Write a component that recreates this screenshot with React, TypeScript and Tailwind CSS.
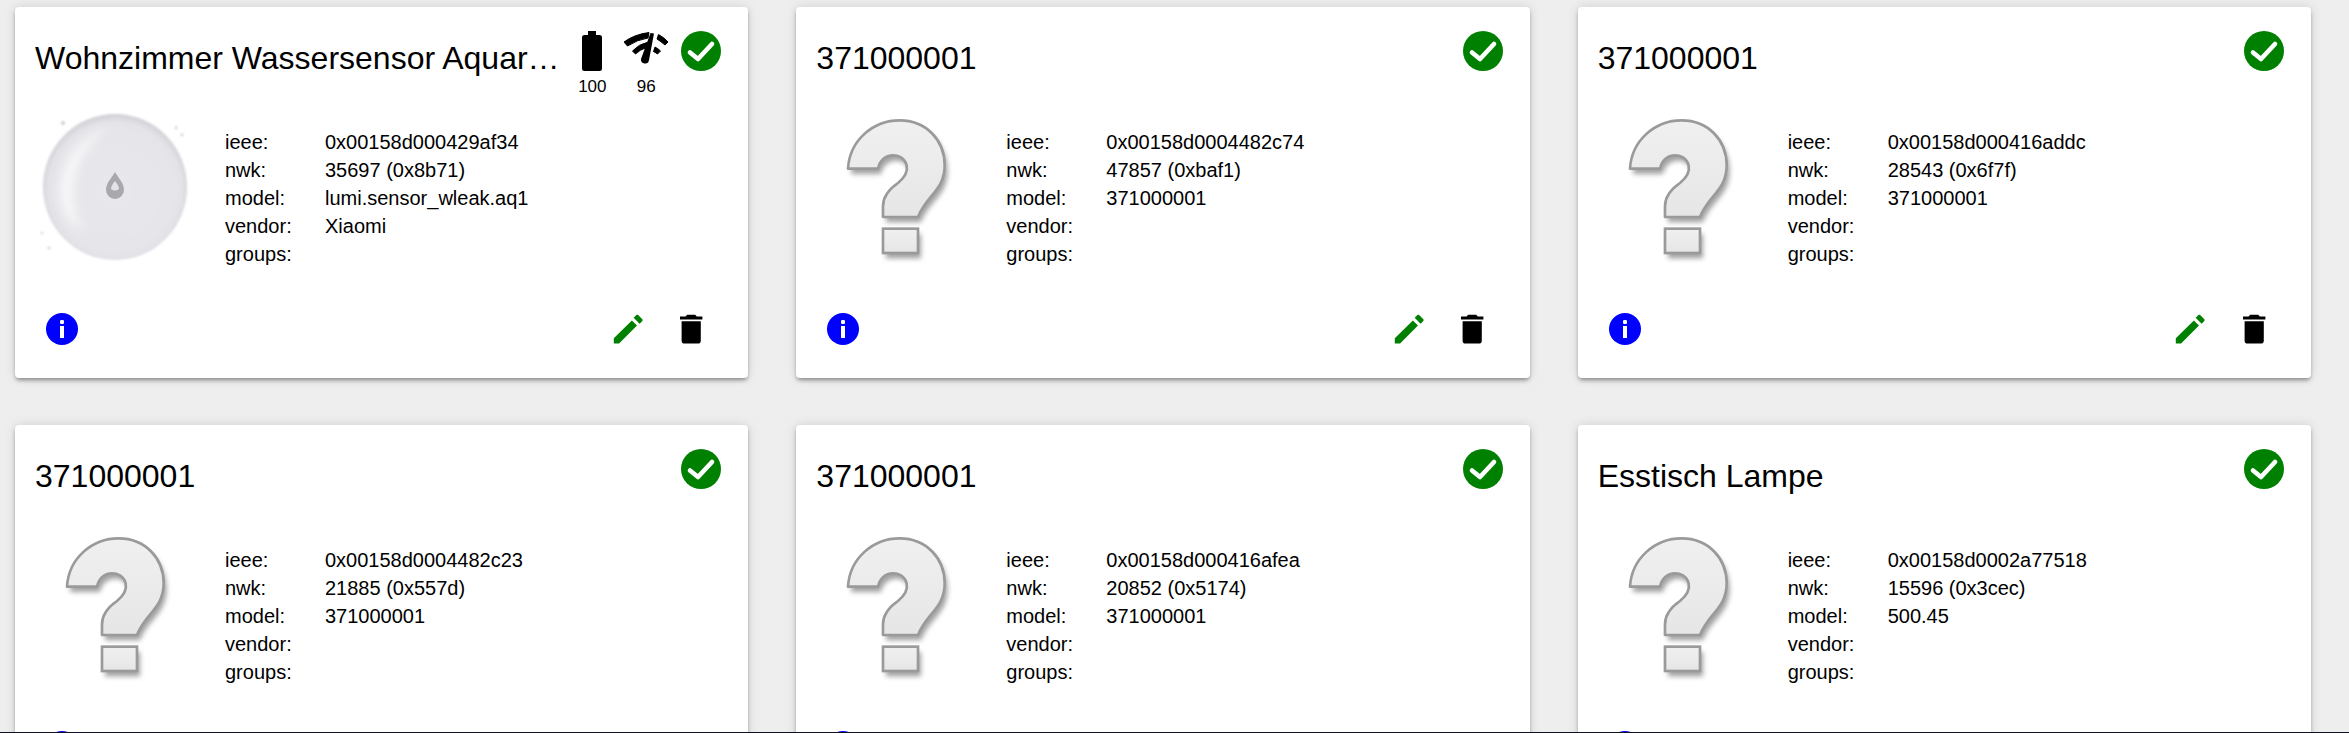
import React from "react";

type Device = { title: string; ieee: string; nwk: string; model: string; vendor?: string; sensor?: boolean };

const devices: Device[] = [
  { title: "Wohnzimmer Wassersensor Aquara Unten", ieee: "0x00158d000429af34", nwk: "35697 (0x8b71)", model: "lumi.sensor_wleak.aq1", vendor: "Xiaomi", sensor: true },
  { title: "371000001", ieee: "0x00158d0004482c74", nwk: "47857 (0xbaf1)", model: "371000001" },
  { title: "371000001", ieee: "0x00158d000416addc", nwk: "28543 (0x6f7f)", model: "371000001" },
  { title: "371000001", ieee: "0x00158d0004482c23", nwk: "21885 (0x557d)", model: "371000001" },
  { title: "371000001", ieee: "0x00158d000416afea", nwk: "20852 (0x5174)", model: "371000001" },
  { title: "Esstisch Lampe", ieee: "0x00158d0002a77518", nwk: "15596 (0x3cec)", model: "500.45" },
];

function CheckIcon() {
  return (
    <svg width="48" height="48" viewBox="0 0 48 48" className="shrink-0">
      <circle cx="24" cy="24" r="20" fill="#008000" />
      <path d="M13 25.5 L21 32 L35 17" fill="none" stroke="#fff" strokeWidth="4.6" strokeLinecap="round" strokeLinejoin="round" />
    </svg>
  );
}

function BatteryIcon() {
  return (
    <svg width="54" height="48" viewBox="0 0 54 48">
      <path d="M23 4 H31 V8 H34.5 A2.5 2.5 0 0 1 37 10.5 V41.5 A2.5 2.5 0 0 1 34.5 44 H19.5 A2.5 2.5 0 0 1 17 41.5 V10.5 A2.5 2.5 0 0 1 19.5 8 H23 Z" fill="#000" />
    </svg>
  );
}

function SignalIcon() {
  return (
    <svg width="54" height="48" viewBox="0 0 54 48">
      <path d="M5 15 Q15 7.5 30 5.5 L29 11 Q18.5 12.5 8.5 19 Z" fill="#000" strokeLinejoin="round" stroke="#000" strokeWidth="1" />
      <path d="M39.5 7.5 Q44.5 10 49 15 L46 18 Q42 14.5 38 12 Z" fill="#000" stroke="#000" strokeWidth="1" strokeLinejoin="round" />
      <path d="M13.5 24 Q20 17 28 15.5 L26.5 21 Q21 22.5 16.5 27 Z" fill="#000" stroke="#000" strokeWidth="1" strokeLinejoin="round" />
      <path d="M36 20 Q39 21.5 41.5 24 L38.5 27 Q36.5 25.5 34.5 24.5 Z" fill="#000" stroke="#000" strokeWidth="1" strokeLinejoin="round" />
      <path d="M31.5 6 L35 6.5 L30 33 A4 4 0 0 1 22 32 Z" fill="#000" />
    </svg>
  );
}

function InfoIcon() {
  return (
    <svg width="38" height="38" viewBox="0 0 38 38">
      <circle cx="19" cy="19" r="16" fill="#0000ff" />
      <rect x="17" y="10" width="4" height="4" rx="1.2" fill="#fff" />
      <rect x="17" y="16" width="4" height="12" fill="#fff" />
    </svg>
  );
}

function EditIcon() {
  return (
    <svg width="38.4" height="38.4" viewBox="0 0 24 24">
      <path fill="#008000" d="M20.71,7.04C21.1,6.65 21.1,6 20.71,5.63L18.37,3.29C18,2.9 17.35,2.9 16.96,3.29L15.4,4.85L19.15,8.6M3,17.7V21H6.3L17.5,9.7L14.3,6.5L3,17.7Z" />
    </svg>
  );
}

function DeleteIcon() {
  return (
    <svg width="38.4" height="38.4" viewBox="0 0 24 24">
      <path fill="#000" d="M19,4H15.5L14.5,3H9.5L8.5,4H5V6H19M6,19A2,2 0 0,0 8,21H16A2,2 0 0,0 18,19V7H6V19Z" />
    </svg>
  );
}

function QuestionImage({ id }: { id: string }) {
  const q = "M255 350 V318 C255 285 275 265 300 248 C320 232 330 215 326 195 C320 172 300 165 285 165 C262 165 245 180 240 205 H150 C155 120 225 60 305 60 C385 60 440 120 440 195 C440 270 385 285 360 350 Z";
  return (
    <svg width="160" height="160" viewBox="54 20 480 480">
      <defs>
        <filter id={`s${id}`} x="-30%" y="-30%" width="160%" height="160%">
          <feGaussianBlur stdDeviation="8" />
        </filter>
        <filter id={`b${id}`} x="-10%" y="-10%" width="120%" height="120%">
          <feGaussianBlur stdDeviation="2" />
        </filter>
        <linearGradient id={`g${id}`} x1="0" y1="0" x2="0" y2="1">
          <stop offset="0" stopColor="#f0f0f0" />
          <stop offset="1" stopColor="#e6e6e6" />
        </linearGradient>
      </defs>
      <g filter={`url(#s${id})`} opacity="0.65" transform="translate(9 16)">
        <path d={q} fill="#6f6f6f" />
        <rect x="255" y="385" width="105" height="73" fill="#6f6f6f" />
      </g>
      <g filter={`url(#b${id})`}>
        <path d={q} fill={`url(#g${id})`} stroke="#9a9a9a" strokeWidth="8" strokeLinejoin="round" />
        <rect x="255" y="385" width="105" height="73" fill={`url(#g${id})`} stroke="#9a9a9a" strokeWidth="8" />
      </g>
    </svg>
  );
}

function SensorImage() {
  return (
    <svg width="160" height="160" viewBox="0 0 160 160">
      <defs>
        <radialGradient id="sensorBody" cx="0.5" cy="0.52" r="0.52">
          <stop offset="0" stopColor="#e8e8ec" />
          <stop offset="0.78" stopColor="#e6e6ea" />
          <stop offset="0.9" stopColor="#e2e2e7" />
          <stop offset="1" stopColor="#cfcfd5" />
        </radialGradient>
        <filter id="sensorBlur"><feGaussianBlur stdDeviation="1" /></filter>
        <filter id="sensorSoft" x="-30%" y="-30%" width="160%" height="160%"><feGaussianBlur stdDeviation="5" /></filter>
      </defs>
      <g fill="#cfcfcf" filter="url(#sensorBlur)">
        <circle cx="28" cy="16" r="2" />
        <circle cx="141" cy="21" r="1.4" />
        <circle cx="147" cy="28" r="1.4" />
        <circle cx="7" cy="126" r="1.2" />
        <circle cx="14" cy="141" r="1.4" />
      </g>
      <ellipse cx="80" cy="80" rx="72" ry="73" fill="url(#sensorBody)" filter="url(#sensorBlur)" />
      <path d="M26 92 C22 60 42 30 76 20 C52 34 36 60 38 92 C39 108 44 118 50 126 C36 118 28 106 26 92 Z" fill="#fbfbfd" opacity="0.85" filter="url(#sensorSoft)" />
      <path d="M80 65 C76 72 71 76 71 83 A9 9 0 0 0 89 83 C89 76 84 72 80 65 Z" fill="#a9a9ad" />
      <path d="M80 74 C78 77 76 79 76 82 Q80 85 84 82 C84 79 82 77 80 74 Z" fill="#e4e4e6" />
    </svg>
  );
}

function Row({ label, value }: { label: string; value?: string }) {
  return (
    <div className="flex h-[28px] items-center">
      <div className="w-[100px]">{label}</div>
      <div>{value}</div>
    </div>
  );
}

function Card({ d, id }: { d: Device; id: string }) {
  return (
    <div className="flex h-[371px] flex-col rounded-[4px] bg-white pt-5 shadow-[0_3px_4px_-1px_rgba(0,0,0,0.4),0_0_12px_0_rgba(0,0,0,0.12)]">
      <div className="flex h-[80px] items-start pl-5 pr-[23px]">
        <div className="min-w-0 flex-1 truncate text-[32px] leading-[62px]">{d.title}</div>
        {d.sensor && (
          <>
            <div className="flex flex-col items-center text-[17px] leading-6">
              <BatteryIcon />
              <span>100</span>
            </div>
            <div className="flex flex-col items-center text-[17px] leading-6">
              <SignalIcon />
              <span>96</span>
            </div>
            <div className="w-[4px]" />
          </>
        )}
        <CheckIcon />
      </div>
      <div className="flex h-[180px] items-start pl-5">
        <div className="h-[160px] w-[160px]">
          {d.sensor ? <SensorImage /> : <QuestionImage id={id} />}
        </div>
        <div className="ml-[30px] mt-[21px] text-[20px] leading-[28px]">
          <Row label="ieee:" value={d.ieee} />
          <Row label="nwk:" value={d.nwk} />
          <Row label="model:" value={d.model} />
          <Row label="vendor:" value={d.vendor} />
          <Row label="groups:" />
        </div>
      </div>
      <div className="flex h-[84px] items-center justify-between pl-[28px] pr-[38px]">
        <InfoIcon />
        <div className="flex items-center gap-[25px]">
          <EditIcon />
          <DeleteIcon />
        </div>
      </div>
    </div>
  );
}

export default function App() {
  return (
    <div className="flex h-[733px] w-[2349px] flex-col overflow-hidden bg-[#eeeeee] font-['Liberation_Sans',Arial,sans-serif] text-black">
      <div className="min-h-0 flex-1 overflow-hidden pl-[15px] pt-[7px]">
        <div className="grid w-[2296px] grid-cols-3 gap-x-12 gap-y-[47px]">
          {devices.map((d, i) => (
            <Card key={i} d={d} id={String(i)} />
          ))}
        </div>
      </div>
      <div className="h-px shrink-0 bg-[#111122]" />
    </div>
  );
}
